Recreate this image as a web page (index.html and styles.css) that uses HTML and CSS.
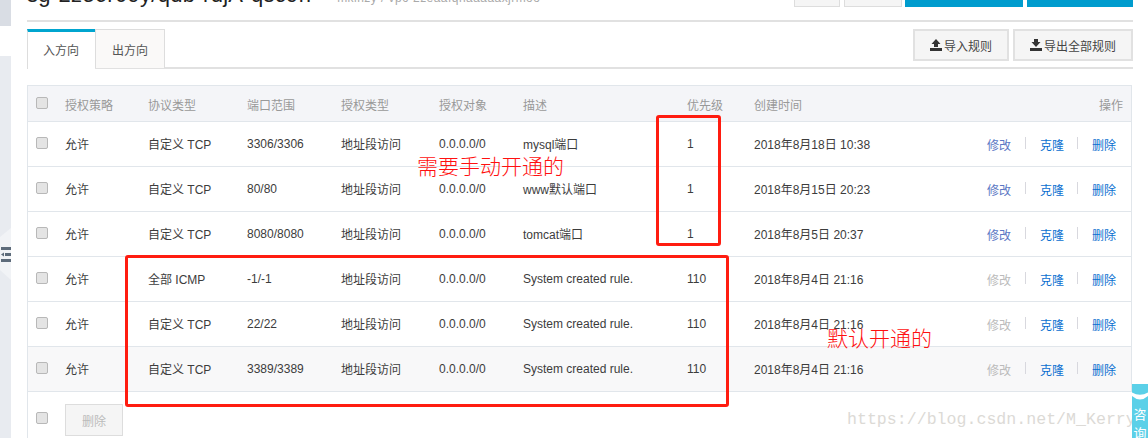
FILE: index.html
```html
<!DOCTYPE html>
<html lang="zh-CN">
<head>
<meta charset="utf-8">
<title>安全组规则</title>
<link rel="stylesheet" href="styles.css">
</head>
<body>
<div class="page">
  <aside class="side">
    <div class="side-top"></div>
    <div class="side-gap"></div>
    <div class="side-rest"></div>
    <div class="side-handle">
      <svg width="11" height="52" viewBox="0 0 11 52">
        <path d="M0 9 L11 0 V52 L0 42Z" fill="#f1f3f6"/>
        <path d="M1 19h10v3H1zM1 31h10v3H1zM5 25h6v3H5zM1 26.500l3-2v4z" fill="#5d6b7a"/>
      </svg>
    </div>
  </aside>
  <main class="main">
    <header class="head">
      <div class="head-left">
        <span class="title">sg-2ze6r09y/qdb-rdjA-qsc9h</span>
        <span class="subtitle">mklhzy / vpc-2zeaafqhaaaaaxjrmoo</span>
      </div>
      <div class="head-btns">
        <span class="top-btn top-a"></span>
        <span class="top-btn top-b"></span>
        <span class="top-btn top-c"></span>
        <span class="top-btn top-d"></span>
      </div>
    </header>
    <nav class="tabbar">
      <div class="tabs">
        <span class="tab tab-on">入方向</span>
        <span class="tab">出方向</span>
      </div>
      <div class="tools">
        <button class="tool tool-in">
          <svg width="12" height="12" viewBox="0 0 12 12"><path d="M6 0l4.500 5H8v3H4V5H1.500z M0 9h12v3H0z" fill="#333"/></svg>
          导入规则
        </button>
        <button class="tool tool-out">
          <svg width="12" height="12" viewBox="0 0 12 12"><path d="M4 0h4v3h2.500L6 8 1.500 3H4z M0 9h12v3H0z" fill="#333"/></svg>
          导出全部规则
        </button>
      </div>
    </nav>
    <table class="rules">
      <colgroup>
        <col class="c-check"><col class="c-policy"><col class="c-proto"><col class="c-port"><col class="c-auth"><col class="c-obj"><col class="c-desc"><col class="c-pri"><col class="c-time"><col>
      </colgroup>
      <thead>
        <tr>
          <th class="cell-check"><input type="checkbox" class="check"></th>
          <th>授权策略</th><th>协议类型</th><th>端口范围</th><th>授权类型</th><th>授权对象</th><th>描述</th><th>优先级</th><th>创建时间</th><th class="th-ops">操作</th>
        </tr>
      </thead>
      <tbody>
        <tr>
          <td class="cell-check"><input type="checkbox" class="check"></td>
          <td>允许</td><td>自定义 TCP</td><td>3306/3306</td><td>地址段访问</td><td>0.0.0.0/0</td><td>mysql端口</td><td>1</td><td>2018年8月18日 10:38</td>
          <td class="ops"><a class="op op-edit">修改</a><i class="sep"></i><a class="op">克隆</a><i class="sep sep-last"></i><a class="op">删除</a></td>
        </tr>
        <tr>
          <td class="cell-check"><input type="checkbox" class="check"></td>
          <td>允许</td><td>自定义 TCP</td><td>80/80</td><td>地址段访问</td><td>0.0.0.0/0</td><td>www默认端口</td><td>1</td><td>2018年8月15日 20:23</td>
          <td class="ops"><a class="op op-edit">修改</a><i class="sep"></i><a class="op">克隆</a><i class="sep sep-last"></i><a class="op">删除</a></td>
        </tr>
        <tr>
          <td class="cell-check"><input type="checkbox" class="check"></td>
          <td>允许</td><td>自定义 TCP</td><td>8080/8080</td><td>地址段访问</td><td>0.0.0.0/0</td><td>tomcat端口</td><td>1</td><td>2018年8月5日 20:37</td>
          <td class="ops"><a class="op op-edit">修改</a><i class="sep"></i><a class="op">克隆</a><i class="sep sep-last"></i><a class="op">删除</a></td>
        </tr>
        <tr>
          <td class="cell-check"><input type="checkbox" class="check"></td>
          <td>允许</td><td>全部 ICMP</td><td>-1/-1</td><td>地址段访问</td><td>0.0.0.0/0</td><td>System created rule.</td><td>110</td><td>2018年8月4日 21:16</td>
          <td class="ops"><a class="op op-off">修改</a><i class="sep"></i><a class="op">克隆</a><i class="sep sep-last"></i><a class="op">删除</a></td>
        </tr>
        <tr>
          <td class="cell-check"><input type="checkbox" class="check"></td>
          <td>允许</td><td>自定义 TCP</td><td>22/22</td><td>地址段访问</td><td>0.0.0.0/0</td><td>System created rule.</td><td>110</td><td>2018年8月4日 21:16</td>
          <td class="ops"><a class="op op-off">修改</a><i class="sep"></i><a class="op">克隆</a><i class="sep sep-last"></i><a class="op">删除</a></td>
        </tr>
        <tr class="row-hover">
          <td class="cell-check"><input type="checkbox" class="check"></td>
          <td>允许</td><td>自定义 TCP</td><td>3389/3389</td><td>地址段访问</td><td>0.0.0.0/0</td><td>System created rule.</td><td>110</td><td>2018年8月4日 21:16</td>
          <td class="ops"><a class="op op-off">修改</a><i class="sep"></i><a class="op">克隆</a><i class="sep sep-last"></i><a class="op">删除</a></td>
        </tr>
      </tbody>
    </table>
    <footer class="foot">
      <input type="checkbox" class="check">
      <button class="del">删除</button>
    </footer>
  </main>
  <div class="note box-one"></div>
  <div class="note box-two"></div>
  <div class="label label-one">需要手动开通的</div>
  <div class="label label-two">默认开通的</div>
  <div class="mark">https://blog.csdn.net/M_Kerry</div>
  <div class="consult">
    <svg width="16" height="9" viewBox="0 0 16 9"><path d="M0 0.500Q8 5 16 0.500V4Q8 11 0 4Z" fill="#fff"/></svg>
    <span>咨</span><span>询</span>
  </div>
</div>
</body>
</html>
```
FILE: styles.css
```css
* { box-sizing: border-box; }
html, body { margin: 0; padding: 0; background: #fff; }
body {
  font-family: "Liberation Sans", "Noto Sans CJK SC", sans-serif;
  font-size: 12px;
  color: #3c3c3c;
}
.page {
  position: relative;
  width: 1148px;
  height: 438px;
  overflow: hidden;
  display: flex;
}
.side {
  position: relative;
  width: 11px;
  height: 438px;
  display: flex;
  flex-direction: column;
  flex: none;
}
.side-top { height: 26px; background: #d9dde4; }
.side-gap { height: 30px; background: #fff; }
.side-rest { flex: 1; background: #e8ebf0; }
.side-handle { position: absolute; left: 0; top: 228px; line-height: 0; }

.main { width: 1106px; margin-left: 16px; flex: none; }

.head {
  height: 22px;
  border-bottom: 2px solid #e1e1e1;
  display: flex;
  justify-content: space-between;
}
.head-left { display: flex; align-items: flex-end; height: 5px; white-space: nowrap; }
.title { font-size: 22px; line-height: 22px; color: #222; letter-spacing: 0.3px; margin-bottom: -1px; }
.subtitle { font-size: 12px; line-height: 12px; color: #aaa; margin-left: 26px; margin-bottom: 1px; letter-spacing: 0.45px; }
.head-btns { display: flex; height: 7px; gap: 4px; }
.top-btn { display: block; height: 7px; }
.top-a { width: 46px; background: #f5f5f5; border: 1px solid #ddd; border-top: 0; }
.top-b { width: 58px; background: #f5f5f5; border: 1px solid #ddd; border-top: 0; }
.top-c { width: 118px; background: #009cce; margin-left: -1px; }
.top-d { width: 106px; background: #009cce; }

.tabbar {
  margin-top: 7px;
  height: 40px;
  border-bottom: 2px solid #e1e1e1;
  display: flex;
  justify-content: space-between;
  align-items: flex-start;
}
.tabs { display: flex; height: 40px; }
.tab {
  width: 70px;
  height: 39px;
  display: flex;
  align-items: center;
  justify-content: center;
  background: #faf9f8;
  border: 1px solid #ddd;
  border-bottom: 0;
  padding-top: 1px;
  color: #555;
}
.tab-on {
  width: 68px;
  height: 40px;
  background: #fff;
  border-top: 3px solid #00a5cf;
  border-right: 0;
  padding: 0 1px 2px 0;
}
.tools { display: flex; gap: 4px; }
.tool {
  height: 32px;
  display: flex;
  align-items: center;
  gap: 2px;
  padding: 0 15px;
  background: #f5f5f5;
  border: 2px solid #e1e1e1;
  font: inherit;
  color: #444;
  white-space: nowrap;
}

.rules {
  margin-top: 16px;
  width: 1105px;
  table-layout: fixed;
  border-collapse: separate;
  border-spacing: 0;
  border: 1px solid #e1e6eb;
  border-bottom: 0;
}
.c-check { width: 37px; }
.c-policy { width: 83px; }
.c-proto { width: 99px; }
.c-port { width: 94px; }
.c-auth { width: 98px; }
.c-obj { width: 84px; }
.c-desc { width: 164px; }
.c-pri { width: 67px; }
.c-time { width: 220px; }
.rules th, .rules td { padding: 0; text-align: left; white-space: nowrap; border-bottom: 1px solid #e1e6eb; }
.rules th { height: 36px; padding-top: 1px; background: #f4f5f8; font-weight: 400; color: #999; }
.rules td { height: 45px; padding-bottom: 1px; color: #3c3c3c; }
.rules .cell-check { padding: 0 0 3px 8px; line-height: 0; }
.rules th.cell-check { padding-top: 0; padding-bottom: 2px; }
.rules .th-ops { text-align: right; padding-right: 8px; }
.rules .ops { text-align: right; padding: 1px 15px 0 0; }
.row-hover td { background: #f8f8f9; }

.check {
  appearance: none;
  display: inline-block;
  width: 12px;
  height: 12px;
  margin: 0;
  border: 1px solid #b8b8b8;
  border-radius: 2px;
  background: #e4e4e4;
  vertical-align: top;
}
.op { color: #0a6fd0; }
.op-edit { color: #5b77c4; }
.op-off { color: #bbb; }
.sep {
  display: inline-block;
  width: 1px;
  height: 12px;
  margin: 0 14px;
  background: #d8d8de;
  vertical-align: 1px;
}
.sep-last { margin-left: 13px; }

.foot {
  height: 47px;
  border-left: 1px solid #e1e6eb;
  display: flex;
  align-items: flex-start;
  padding-left: 8px;
  padding-top: 12px;
}
.foot .check { margin-top: 8px; }
.del {
  margin-left: 17px;
  width: 58px;
  height: 32px;
  background: #f5f5f5;
  border: 1px solid #ddd;
  font: inherit;
  color: #bbb;
}

.note {
  position: absolute;
  border: 3px solid #ff1c10;
  border-radius: 3px;
}
.box-one { left: 656px; top: 115px; width: 65px; height: 131px; }
.box-two { left: 125px; top: 255px; width: 604px; height: 152px; }
.label {
  position: absolute;
  font-family: "Noto Sans CJK SC", sans-serif;
  font-weight: 300;
  font-size: 21px;
  line-height: 24px;
  color: #ff1010;
  white-space: nowrap;
}
.label-one { left: 417px; top: 153px; }
.label-two { left: 827px; top: 325px; }
.mark {
  position: absolute;
  left: 847px;
  top: 408px;
  font-family: "Liberation Mono", monospace;
  font-size: 16.6px;
  line-height: 24px;
  color: #dcdad6;
  white-space: nowrap;
}
.consult {
  position: absolute;
  left: 1132px;
  top: 384px;
  width: 16px;
  height: 54px;
  background: #5bd0e8;
  color: #fff;
  font-size: 13px;
  line-height: 19px;
  text-align: center;
  font-family: "Noto Sans CJK SC", sans-serif;
  display: flex;
  flex-direction: column;
  align-items: center;
  padding-top: 8px;
}
.consult svg { flex: none; margin-bottom: 3px; }
.consult span { display: block; flex: none; }
```
